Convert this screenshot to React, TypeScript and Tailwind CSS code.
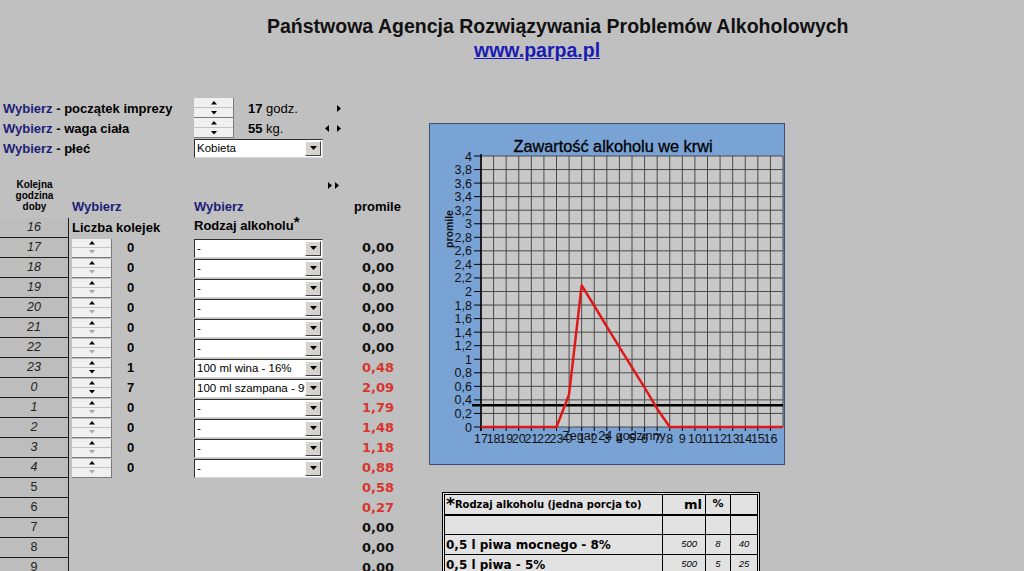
import React from 'react'

type Row = { h: string; n?: number; drink?: string; p: string; red?: boolean }

const rows: Row[] = [
  { h: '17', n: 0, drink: '-', p: '0,00' },
  { h: '18', n: 0, drink: '-', p: '0,00' },
  { h: '19', n: 0, drink: '-', p: '0,00' },
  { h: '20', n: 0, drink: '-', p: '0,00' },
  { h: '21', n: 0, drink: '-', p: '0,00' },
  { h: '22', n: 0, drink: '-', p: '0,00' },
  { h: '23', n: 1, drink: '100 ml wina - 16%', p: '0,48', red: true },
  { h: '0', n: 7, drink: '100 ml szampana - 9%', p: '2,09', red: true },
  { h: '1', n: 0, drink: '-', p: '1,79', red: true },
  { h: '2', n: 0, drink: '-', p: '1,48', red: true },
  { h: '3', n: 0, drink: '-', p: '1,18', red: true },
  { h: '4', n: 0, drink: '-', p: '0,88', red: true },
  { h: '5', p: '0,58', red: true },
  { h: '6', p: '0,27', red: true },
  { h: '7', p: '0,00' },
  { h: '8', p: '0,00' },
  { h: '9', p: '0,00' },
]

const grid = 'grid grid-cols-[69px_3px_40px_82px_129px_71px]'

function Tri({ dir, muted }: { dir: 'up' | 'down' | 'left' | 'right'; muted?: boolean }) {
  const d = {
    up: 'M0 3.5L3 0L6 3.5Z',
    down: 'M0 0L6 0L3 3.5Z',
    left: 'M4 0L4 7L0 3.5Z',
    right: 'M0 0L4 3.5L0 7Z',
  }[dir]
  const side = dir === 'left' || dir === 'right'
  return (
    <svg width={side ? 4 : 6} height={side ? 7 : 4} viewBox={side ? '0 0 4 7' : '0 0 6 4'} className="block">
      <path d={d} fill={muted ? '#a8a8a8' : '#000'} />
    </svg>
  )
}

function Spinner({ muted, tall }: { muted?: boolean; tall?: boolean }) {
  return (
    <div className={`flex w-[40px] flex-col border-b border-r border-[#7a7a7a] bg-[#f0f0f0] ${tall ? 'h-[20px]' : 'h-[19px]'}`}>
      <div className="flex flex-1 items-center justify-center border-b border-[#c4c4c4]">
        <Tri dir="up" />
      </div>
      <div className="flex flex-1 items-center justify-center">
        <Tri dir="down" muted={muted} />
      </div>
    </div>
  )
}

function Select({ text }: { text: string }) {
  return (
    <div className="flex h-[19px] w-[129px] items-center border border-b-[#d8d8d8] border-l-[#303030] border-r-[#d8d8d8] border-t-[#303030] bg-white">
      <span className="flex-1 overflow-hidden whitespace-nowrap pl-[2px] text-[11.5px] leading-[15px] text-black">{text}</span>
      <div className="mr-[1px] flex h-[15px] w-[16px] shrink-0 items-center justify-center border border-b-[#404040] border-l-white border-r-[#404040] border-t-white bg-[#d6d3ce]">
        <svg width="7" height="4" viewBox="0 0 7 4" className="block">
          <path d="M0 0L7 0L3.5 4Z" fill="#000" />
        </svg>
      </div>
    </div>
  )
}

function Chart() {
  const x0 = 52
  const x1 = 354
  const y0 = 33
  const y1 = 304
  const xs = (x1 - x0) / 24
  const ys = (y1 - y0) / 20
  const hours = [17, 18, 19, 20, 21, 22, 23, 0, 1, 2, 3, 4, 5, 6, 7, 8, 9, 10, 11, 12, 13, 14, 15, 16]
  const vals = [0, 0, 0, 0, 0, 0, 0, 0.48, 2.09, 1.79, 1.48, 1.18, 0.88, 0.58, 0.27, 0, 0, 0, 0, 0, 0, 0, 0, 0]
  const vy = (v: number) => y1 - (v / 0.2) * ys
  const pts = vals.map((v, i) => `${x0 + i * xs},${vy(v)}`).join(' ') + ` ${x1},${y1}`
  const font = 'Liberation Sans, Arial, sans-serif'
  return (
    <svg width="356" height="342" viewBox="0 0 356 342" className="block">
      <rect x="0.5" y="0.5" width="355" height="341" fill="#79a2d5" stroke="#3d4f72" />
      <text x="184" y="29" textAnchor="middle" fontFamily={font} fontSize="16.3" fill="#000" stroke="#000" strokeWidth="0.3">
        Zawartość alkoholu we krwi
      </text>
      <rect x={x0} y={y0} width={x1 - x0} height={y1 - y0} fill="#c8c8c8" />
      {Array.from({ length: 25 }).map((_, i) => (
        <line key={'v' + i} x1={x0 + i * xs} x2={x0 + i * xs} y1={y0} y2={y1} stroke="#4a4a4a" strokeWidth="1" />
      ))}
      {Array.from({ length: 21 }).map((_, i) => (
        <line key={'h' + i} x1={x0} x2={x1} y1={y1 - i * ys} y2={y1 - i * ys} stroke="#4a4a4a" strokeWidth="1" />
      ))}
      <line x1={x0} x2={x0} y1={y0 - 2} y2={y1 + 4} stroke="#000" strokeWidth="1.5" />
      {Array.from({ length: 21 }).map((_, i) => (
        <g key={'yl' + i}>
          <line x1={x0 - 7} x2={x0} y1={y1 - i * ys} y2={y1 - i * ys} stroke="#000" />
          <text x={x0 - 9} y={y1 - i * ys + 4.5} textAnchor="end" fontFamily={font} fontSize="12.5" fill="#111">
            {String(Math.round(i * 2) / 10).replace('.', ',')}
          </text>
        </g>
      ))}
      {hours.map((h, i) => (
        <g key={'xl' + i}>
          <line x1={x0 + i * xs} x2={x0 + i * xs} y1={y1} y2={y1 + 4} stroke="#000" />
          <text x={x0 + i * xs} y="320" textAnchor="middle" fontFamily={font} fontSize="12.5" fill="#111">
            {h}
          </text>
        </g>
      ))}
      <text x="185" y="317" textAnchor="middle" fontFamily={font} fontSize="12.5" fill="#111">
        Zegar 24 godzinny
      </text>
      <text
        x="0"
        y="0"
        transform="translate(24 106) rotate(-90)"
        textAnchor="middle"
        fontFamily={font}
        fontSize="10.5"
        fontWeight="bold"
        fill="#111"
      >
        promile
      </text>
      <line x1={x0 - 9} x2={x1} y1={vy(0.32)} y2={vy(0.32)} stroke="#000" strokeWidth="2.5" />
      <polyline points={pts} fill="none" stroke="#e01818" strokeWidth="2.5" strokeLinejoin="round" />
    </svg>
  )
}

function Portions() {
  const cell = 'flex items-center border-r border-black'
  const num = "font-['Liberation_Sans',Arial,sans-serif] text-[9.5px] italic"
  return (
    <div className="w-[318px] border-[3px] border-double border-black bg-[#e2e2e2] font-['DejaVu_Sans',Verdana,sans-serif] text-black">
      <div className="flex h-[21px] border-b-2 border-black">
        <div className={`${cell} w-[218px] pl-[1px]`}>
          <span className="text-[17px] font-bold leading-none">*</span>
          <span className="text-[10px] font-bold">Rodzaj alkoholu (jedna porcja to)</span>
        </div>
        <div className={`${cell} w-[43px] justify-end pr-[3px] text-[13px] font-bold`}>ml</div>
        <div className={`${cell} w-[25px] justify-center text-[11px] font-bold`}>%</div>
        <div className="w-[26px]" />
      </div>
      <div className="flex h-[19px] border-b border-black">
        <div className={`${cell} w-[218px]`} />
        <div className={`${cell} w-[43px]`} />
        <div className={`${cell} w-[25px]`} />
        <div className="w-[26px]" />
      </div>
      {[
        ['0,5 l piwa mocnego - 8%', '500', '8', '40'],
        ['0,5 l piwa - 5%', '500', '5', '25'],
      ].map((r) => (
        <div key={r[0]} className="flex h-[20px] border-b border-black">
          <div className={`${cell} w-[218px] pl-[1px] text-[12px] font-bold`}>{r[0]}</div>
          <div className={`${cell} w-[43px] justify-end pr-[8px] ${num}`}>{r[1]}</div>
          <div className={`${cell} w-[25px] justify-center ${num}`}>{r[2]}</div>
          <div className={`flex w-[26px] items-center justify-center ${num}`}>{r[3]}</div>
        </div>
      ))}
    </div>
  )
}

export default function App() {
  const navy = 'text-[#1e1e78]'
  return (
    <div className="h-[571px] w-[1024px] overflow-hidden bg-[#c0c0c0] font-['Liberation_Sans',Arial,sans-serif] text-black">
      {/* Header */}
      <div className="pt-[16px]">
        <div className="pl-[267px] text-[19.5px] font-bold leading-[20px] text-[#111]">
          Państwowa Agencja Rozwiązywania Problemów Alkoholowych
        </div>
        <div className="mt-[4px] pl-[474px] text-[19.5px] font-bold leading-[20px]">
          <a href="#" className="text-[#1a1ab4] underline">www.parpa.pl</a>
        </div>
      </div>

      <div className="mt-[37px] flex">
        {/* Left: calculator */}
        <div className="w-[429px] shrink-0">
          <div className="pt-[1px]">
            <div className="flex h-[20px] items-center">
              <div className="w-[194px] pl-[3px] pt-[2px] text-[13px] font-bold">
                <span className={navy}>Wybierz</span> - początek imprezy
              </div>
              <Spinner tall />
              <div className="ml-[14px] w-[76px] pt-[2px] text-[13px]">
                <b>17</b> godz.
              </div>
              <div className="ml-[13px]">
                <Tri dir="right" />
              </div>
            </div>
            <div className="flex h-[20px] items-center">
              <div className="w-[194px] pl-[3px] pt-[2px] text-[13px] font-bold">
                <span className={navy}>Wybierz</span> - waga ciała
              </div>
              <Spinner tall />
              <div className="ml-[14px] w-[76px] pt-[2px] text-[13px]">
                <b>55</b> kg.
              </div>
              <div className="ml-[1px] flex items-center gap-[8px]">
                <Tri dir="left" />
                <Tri dir="right" />
              </div>
            </div>
            <div className="flex h-[20px] items-center">
              <div className="w-[194px] pl-[3px] pt-[1px] text-[13px] font-bold">
                <span className={navy}>Wybierz</span> - płeć
              </div>
              <Select text="Kobieta" />
            </div>
          </div>

          {/* Column headers */}
          <div className={`${grid} h-[60px] items-end`}>
            <div className="mb-[6px] text-center text-[10px] font-bold leading-[11px]">
              Kolejna
              <br />
              godzina
              <br />
              doby
            </div>
            <div />
            <div className={`col-span-2 mb-[4px] text-[13px] font-bold leading-[15px] ${navy}`}>Wybierz</div>
            <div className={`mb-[4px] text-[13px] font-bold leading-[15px] ${navy}`}>Wybierz</div>
            <div className="flex h-full flex-col justify-between pb-[4px] pt-[24px]">
              <div className="ml-[5px] flex gap-[3px]">
                <Tri dir="right" />
                <Tri dir="right" />
              </div>
              <div className="pl-[31px] text-[13px] font-bold leading-[15px]">promile</div>
            </div>
          </div>

          {/* Row 16 */}
          <div className={`${grid} h-[20px] items-center`}>
            <div className="flex h-full items-center justify-center border-b border-r border-[#1a1a1a] bg-[#bdbdbd] text-[12.5px] italic text-[#222]">
              16
            </div>
            <div />
            <div className="col-span-2 text-[13px] font-bold">Liczba kolejek</div>
            <div className="-mt-[6px] text-[13px] font-bold">
              Rodzaj alkoholu<span className="relative -top-[3px] text-[15px]">*</span>
            </div>
            <div />
          </div>

          {rows.map((r) => (
            <div key={r.h} className={`${grid} h-[20px] items-center`}>
              <div
                className={`flex h-full items-center justify-center border-b border-r border-[#1a1a1a] bg-[#bdbdbd] text-[12.5px] text-[#222] ${
                  r.n !== undefined ? 'italic' : ''
                }`}
              >
                {r.h}
              </div>
              <div />
              {r.n !== undefined ? (
                <>
                  <Spinner muted={r.n === 0} />
                  <div className="pl-[15px] text-[13px] font-bold">{r.n}</div>
                  <Select text={r.drink ?? '-'} />
                </>
              ) : (
                <>
                  <div />
                  <div />
                  <div />
                </>
              )}
              <div
                className={`text-right font-['DejaVu_Sans',Verdana,sans-serif] text-[13px] font-bold ${
                  r.red ? 'text-[#d8342c]' : 'text-[#111]'
                }`}
              >
                {r.p}
              </div>
            </div>
          ))}
        </div>

        {/* Right: chart + portions */}
        <div className="pt-[26px]">
          <Chart />
          <div className="ml-[13px] mt-[27px]">
            <Portions />
          </div>
        </div>
      </div>
    </div>
  )
}
